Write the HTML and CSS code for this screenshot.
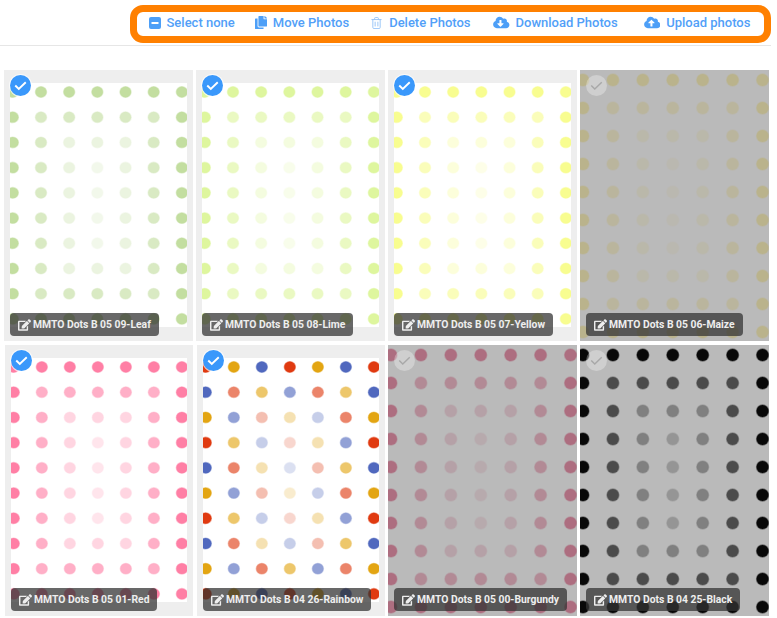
FILE: index.html
```html
<!DOCTYPE html>
<html lang="en">
<head>
<meta charset="utf-8">
<title>Photos</title>
<link rel="stylesheet" href="styles.css">
</head>
<body>
<svg class="defs" width="0" height="0" aria-hidden="true">
<defs>
<g id="dots">
<circle cx="3" cy="10" r="6" class="k0 o0"/><circle cx="33" cy="10" r="6" class="k1 o0"/><circle cx="63" cy="10" r="6" class="k2 o0"/><circle cx="93" cy="10" r="6" class="k0 o0"/><circle cx="123" cy="10" r="6" class="k1 o0"/><circle cx="153" cy="10" r="6" class="k2 o0"/><circle cx="183" cy="10" r="6" class="k0 o0"/>
<circle cx="3" cy="38" r="6" class="k2 o0"/><circle cx="33" cy="38" r="6" class="k0 o1"/><circle cx="63" cy="38" r="6" class="k1 o1"/><circle cx="93" cy="38" r="6" class="k2 o1"/><circle cx="123" cy="38" r="6" class="k0 o1"/><circle cx="153" cy="38" r="6" class="k1 o1"/><circle cx="183" cy="38" r="6" class="k2 o0"/>
<circle cx="3" cy="66" r="6" class="k1 o0"/><circle cx="33" cy="66" r="6" class="k2 o1"/><circle cx="63" cy="66" r="6" class="k0 o2"/><circle cx="93" cy="66" r="6" class="k1 o2"/><circle cx="123" cy="66" r="6" class="k2 o2"/><circle cx="153" cy="66" r="6" class="k0 o1"/><circle cx="183" cy="66" r="6" class="k1 o0"/>
<circle cx="3" cy="94" r="6" class="k0 o0"/><circle cx="33" cy="94" r="6" class="k1 o1"/><circle cx="63" cy="94" r="6" class="k2 o2"/><circle cx="93" cy="94" r="6" class="k0 o3"/><circle cx="123" cy="94" r="6" class="k1 o2"/><circle cx="153" cy="94" r="6" class="k2 o1"/><circle cx="183" cy="94" r="6" class="k0 o0"/>
<circle cx="3" cy="122" r="6" class="k2 o0"/><circle cx="33" cy="122" r="6" class="k0 o1"/><circle cx="63" cy="122" r="6" class="k1 o2"/><circle cx="93" cy="122" r="6" class="k2 o3"/><circle cx="123" cy="122" r="6" class="k0 o2"/><circle cx="153" cy="122" r="6" class="k1 o1"/><circle cx="183" cy="122" r="6" class="k2 o0"/>
<circle cx="3" cy="150" r="6" class="k1 o0"/><circle cx="33" cy="150" r="6" class="k2 o1"/><circle cx="63" cy="150" r="6" class="k0 o2"/><circle cx="93" cy="150" r="6" class="k1 o3"/><circle cx="123" cy="150" r="6" class="k2 o2"/><circle cx="153" cy="150" r="6" class="k0 o1"/><circle cx="183" cy="150" r="6" class="k1 o0"/>
<circle cx="3" cy="178" r="6" class="k0 o0"/><circle cx="33" cy="178" r="6" class="k1 o1"/><circle cx="63" cy="178" r="6" class="k2 o2"/><circle cx="93" cy="178" r="6" class="k0 o3"/><circle cx="123" cy="178" r="6" class="k1 o2"/><circle cx="153" cy="178" r="6" class="k2 o1"/><circle cx="183" cy="178" r="6" class="k0 o0"/>
<circle cx="3" cy="206" r="6" class="k2 o0"/><circle cx="33" cy="206" r="6" class="k0 o1"/><circle cx="63" cy="206" r="6" class="k1 o2"/><circle cx="93" cy="206" r="6" class="k2 o2"/><circle cx="123" cy="206" r="6" class="k0 o2"/><circle cx="153" cy="206" r="6" class="k1 o1"/><circle cx="183" cy="206" r="6" class="k2 o0"/>
<circle cx="3" cy="234" r="6" class="k1 o0"/><circle cx="33" cy="234" r="6" class="k2 o1"/><circle cx="63" cy="234" r="6" class="k0 o1"/><circle cx="93" cy="234" r="6" class="k1 o1"/><circle cx="123" cy="234" r="6" class="k2 o1"/><circle cx="153" cy="234" r="6" class="k0 o1"/><circle cx="183" cy="234" r="6" class="k1 o0"/>
<circle cx="3" cy="262" r="6" class="k0 o0"/><circle cx="33" cy="262" r="6" class="k1 o0"/><circle cx="63" cy="262" r="6" class="k2 o0"/><circle cx="93" cy="262" r="6" class="k0 o0"/><circle cx="123" cy="262" r="6" class="k1 o0"/><circle cx="153" cy="262" r="6" class="k2 o0"/><circle cx="183" cy="262" r="6" class="k0 o0"/>
</g>
<path id="edit" d="M402.6 83.2l90.2 90.2c3.8 3.8 3.8 10 0 13.8L274.4 405.6l-92.8 10.3c-12.4 1.4-22.9-9.1-21.5-21.5l10.3-92.8L388.8 83.2c3.8-3.8 10-3.8 13.8 0zm162-22.9l-48.8-48.8c-15.2-15.2-39.9-15.2-55.2 0l-35.4 35.4c-3.8 3.8-3.8 10 0 13.8l90.2 90.2c3.8 3.8 10 3.8 13.8 0l35.4-35.4c15.2-15.3 15.2-40 0-55.2zM384 346.2V448H64V128h229.8c3.2 0 6.2-1.3 8.5-3.5l40-40c7.6-7.6 2.2-20.5-8.5-20.5H48C21.5 64 0 85.5 0 112v352c0 26.5 21.5 48 48 48h352c26.5 0 48-21.5 48-48V306.2c0-10.7-12.9-16-20.5-8.5l-40 40c-2.2 2.3-3.5 5.3-3.5 8.5z"/>
<path id="check" d="M5.5 11 9.2 14.6 16.5 7.6"/>
</defs>
</svg>

<header class="topbar">
  <nav class="actions">
    <button class="action act-select" type="button">
      <svg class="ico ico-select" viewBox="0 0 12 12"><rect width="12" height="12" rx="2" class="fill"/><rect x="2.5" y="5" width="7" height="2" fill="#fff"/></svg>Select none
    </button>
    <button class="action act-move" type="button">
      <svg class="ico ico-move" viewBox="0 0 448 512" preserveAspectRatio="none"><path class="fill" d="M320 448v40c0 13.255-10.745 24-24 24H24c-13.255 0-24-10.745-24-24V120c0-13.255 10.745-24 24-24h72v296c0 30.879 25.121 56 56 56h168zm0-344V0H152c-13.255 0-24 10.745-24 24v368c0 13.255 10.745 24 24 24h272c13.255 0 24-10.745 24-24V128H344c-13.2 0-24-10.8-24-24zm120.971-31.029L375.029 7.029A24 24 0 0 0 358.059 0H352v96h96v-6.059a24 24 0 0 0-7.029-16.97z"/></svg>Move Photos
    </button>
    <button class="action act-delete" type="button">
      <svg class="ico ico-delete" viewBox="0 0 12 14" preserveAspectRatio="none"><path class="line" d="M.5 3h11M2 3v9.2c0 .7.5 1.3 1.1 1.3h5.8c.6 0 1.1-.6 1.1-1.3V3M4 3V1.4c0-.5.4-.9.9-.9h2.2c.5 0 .9.4.9.9V3M4.5 5.5v5.5M7.5 5.5v5.5"/></svg>Delete Photos
    </button>
    <button class="action act-download" type="button">
      <svg class="ico ico-cloud" viewBox="0 0 640 512"><path class="fill" d="M537.6 226.6c4.1-10.7 6.4-22.4 6.4-34.6 0-53-43-96-96-96-19.7 0-38.1 6-53.3 16.2C367 64.2 315.3 32 256 32c-88.4 0-160 71.6-160 160 0 2.7.1 5.4.2 8.1C40.2 219.8 0 273.2 0 336c0 79.5 64.5 144 144 144h368c70.7 0 128-57.3 128-128 0-61.9-44-113.6-102.4-125.4zm-132.9 88.7L299.3 420.7c-6.2 6.2-16.4 6.2-22.6 0L171.3 315.3c-10.1-10.1-2.9-27.3 11.3-27.3H248V176c0-8.8 7.2-16 16-16h48c8.8 0 16 7.2 16 16v112h65.4c14.2 0 21.4 17.2 11.3 27.3z"/></svg>Download Photos
    </button>
    <button class="action act-upload" type="button">
      <svg class="ico ico-cloud" viewBox="0 0 640 512"><path class="fill" d="M537.6 226.6c4.1-10.7 6.4-22.4 6.4-34.6 0-53-43-96-96-96-19.7 0-38.1 6-53.3 16.2C367 64.2 315.3 32 256 32c-88.4 0-160 71.6-160 160 0 2.7.1 5.4.2 8.1C40.2 219.8 0 273.2 0 336c0 79.5 64.5 144 144 144h368c70.7 0 128-57.3 128-128 0-61.9-44-113.6-102.4-125.4zM393.4 288H328v112c0 8.8-7.2 16-16 16h-48c-8.8 0-16-7.2-16-16V288h-65.4c-14.3 0-21.4-17.2-11.3-27.3l105.4-105.4c6.2-6.2 16.4-6.2 22.6 0l105.4 105.4c10.1 10.1 2.9 27.3-11.3 27.3z"/></svg>Upload photos
    </button>
  </nav>
</header>

<main class="grid">
  <figure class="card selected leaf">
    <svg class="photo" viewBox="0 0 189 271" preserveAspectRatio="none"><use href="#dots"/></svg>
    <span class="tick"><svg viewBox="0 0 22 22"><use href="#check"/></svg></span>
    <figcaption class="label"><svg viewBox="0 0 576 512"><use href="#edit"/></svg>MMTO Dots B 05 09-Leaf</figcaption>
  </figure>
  <figure class="card selected lime">
    <svg class="photo" viewBox="0 0 189 271" preserveAspectRatio="none"><use href="#dots"/></svg>
    <span class="tick"><svg viewBox="0 0 22 22"><use href="#check"/></svg></span>
    <figcaption class="label"><svg viewBox="0 0 576 512"><use href="#edit"/></svg>MMTO Dots B 05 08-Lime</figcaption>
  </figure>
  <figure class="card selected yellow">
    <svg class="photo" viewBox="0 0 189 271" preserveAspectRatio="none"><use href="#dots"/></svg>
    <span class="tick"><svg viewBox="0 0 22 22"><use href="#check"/></svg></span>
    <figcaption class="label"><svg viewBox="0 0 576 512"><use href="#edit"/></svg>MMTO Dots B 05 07-Yellow</figcaption>
  </figure>
  <figure class="card maize">
    <svg class="photo" viewBox="0 0 189 271" preserveAspectRatio="none"><use href="#dots"/></svg>
    <span class="tick"><svg viewBox="0 0 22 22"><use href="#check"/></svg></span>
    <figcaption class="label"><svg viewBox="0 0 576 512"><use href="#edit"/></svg>MMTO Dots B 05 06-Maize</figcaption>
  </figure>
  <figure class="card selected red nudged">
    <svg class="photo" viewBox="0 0 189 271" preserveAspectRatio="none"><use href="#dots"/></svg>
    <span class="tick"><svg viewBox="0 0 22 22"><use href="#check"/></svg></span>
    <figcaption class="label"><svg viewBox="0 0 576 512"><use href="#edit"/></svg>MMTO Dots B 05 01-Red</figcaption>
  </figure>
  <figure class="card selected rainbow nudged">
    <svg class="photo" viewBox="0 0 189 271" preserveAspectRatio="none"><use href="#dots"/></svg>
    <span class="tick"><svg viewBox="0 0 22 22"><use href="#check"/></svg></span>
    <figcaption class="label"><svg viewBox="0 0 576 512"><use href="#edit"/></svg>MMTO Dots B 04 26-Rainbow</figcaption>
  </figure>
  <figure class="card burgundy">
    <svg class="photo" viewBox="0 0 189 271" preserveAspectRatio="none"><use href="#dots"/></svg>
    <span class="tick"><svg viewBox="0 0 22 22"><use href="#check"/></svg></span>
    <figcaption class="label"><svg viewBox="0 0 576 512"><use href="#edit"/></svg>MMTO Dots B 05 00-Burgundy</figcaption>
  </figure>
  <figure class="card black">
    <svg class="photo" viewBox="0 0 189 271" preserveAspectRatio="none"><use href="#dots"/></svg>
    <span class="tick"><svg viewBox="0 0 22 22"><use href="#check"/></svg></span>
    <figcaption class="label"><svg viewBox="0 0 576 512"><use href="#edit"/></svg>MMTO Dots B 04 25-Black</figcaption>
  </figure>
</main>
</body>
</html>
```
FILE: styles.css
```css
* { box-sizing: border-box; }
html, body { margin: 0; height: 618px; overflow: hidden; background: #fff; }
body { width: 777px; font-family: Roboto, "Liberation Sans", sans-serif; }
.defs { position: absolute; }

.topbar {
  width: 771px;
  height: 46px;
  padding-top: 5px;
  border-bottom: 1px solid #e6e6e6;
  display: flex;
  justify-content: flex-end;
  align-items: flex-start;
}
.actions {
  width: 641px;
  height: 38px;
  border: 7.5px solid #ff8000;
  border-radius: 13px;
  background: #fff;
  display: flex;
  align-items: center;
  padding: 0 0 3px 11.5px;
}
.action {
  display: flex;
  align-items: center;
  border: 0;
  background: none;
  padding: 0;
  font: 500 13px/1 Roboto, sans-serif;
  color: #529ff8;
  white-space: nowrap;
}
.act-move { margin-left: 20.5px; }
.act-delete { margin-left: 22px; }
.act-download { margin-left: 22.5px; }
.act-upload { margin-left: 26px; }
.ico { display: block; flex: none; }
.ico-select { width: 12px; height: 12px; margin-right: 6px; }
.ico-move { width: 12px; height: 13px; margin-right: 5.5px; }
.ico-delete { width: 11px; height: 12px; margin-right: 7px; }
.ico-cloud { width: 16.5px; height: 13px; margin-right: 6px; }
.fill { fill: #4d9ff7; }
.line { fill: none; stroke: #8fc0f7; stroke-width: 1; }

.grid {
  display: grid;
  grid-template-columns: repeat(4, 188.5px);
  grid-auto-rows: 271px;
  column-gap: 3.5px;
  row-gap: 4px;
  padding: 24px 0 0 4px;
}
.card {
  position: relative;
  margin: 0;
  overflow: hidden;
  background: #eee;
}
.card::after {
  content: "";
  position: absolute;
  inset: 0;
  background: rgba(0, 0, 0, 0.27);
}
.card.selected::after { display: none; }
.card.selected { padding: 13px 5.5px 14px 5.5px; }
.card.nudged { margin-left: 1px; }
.photo { display: block; width: 100%; height: 100%; background: #fff; }

.k0 { fill: var(--c0); stroke: var(--c0); }
.k1 { fill: var(--c1); stroke: var(--c1); }
.k2 { fill: var(--c2); stroke: var(--c2); }
.k0, .k1, .k2 { stroke-width: 1.4; stroke-opacity: .45; }
.o0 { opacity: 1; }
.o1 { opacity: .62; }
.o2 { opacity: .32; }
.o3 { opacity: .2; }

.leaf { --c0: #c3dea0; --c1: #c3dea0; --c2: #c3dea0; }
.lime { --c0: #def69e; --c1: #def69e; --c2: #def69e; }
.yellow { --c0: #f8fd90; --c1: #f8fd90; --c2: #f8fd90; }
.maize { --c0: #fff6c0; --c1: #fff6c0; --c2: #fff6c0; }
.red { --c0: #ff7fa5; --c1: #ff7fa5; --c2: #ff7fa5; }
.rainbow { --c0: #e03a10; --c1: #e3a512; --c2: #5068be; }
.burgundy { --c0: #ee97b0; --c1: #ee97b0; --c2: #ee97b0; }
.black { --c0: #0c0c0c; --c1: #0c0c0c; --c2: #0c0c0c; }

.tick {
  position: absolute;
  z-index: 2;
  left: 6px;
  top: 5px;
  width: 21px;
  height: 21px;
  border-radius: 50%;
  background: rgba(255, 255, 255, .3);
}
.tick svg { display: block; width: 21px; height: 21px; fill: none; stroke: #a8a8a8; stroke-width: 1.5; }
.selected .tick { background: #3a98fb; box-shadow: 0 0 0 1px rgba(255, 255, 255, .7); }
.selected .tick svg { stroke: #fff; stroke-width: 2; }

.label {
  position: absolute;
  z-index: 2;
  left: 6px;
  bottom: 5px;
  height: 23px;
  padding: 1px 8px 0;
  display: flex;
  align-items: center;
  border-radius: 4px;
  background: rgba(51, 51, 51, .74);
  color: #eee;
  font: 700 10.35px/1 Roboto, sans-serif;
  white-space: nowrap;
}
.label svg { width: 13px; height: 12px; margin-right: 2px; fill: #eee; flex: none; }
```
